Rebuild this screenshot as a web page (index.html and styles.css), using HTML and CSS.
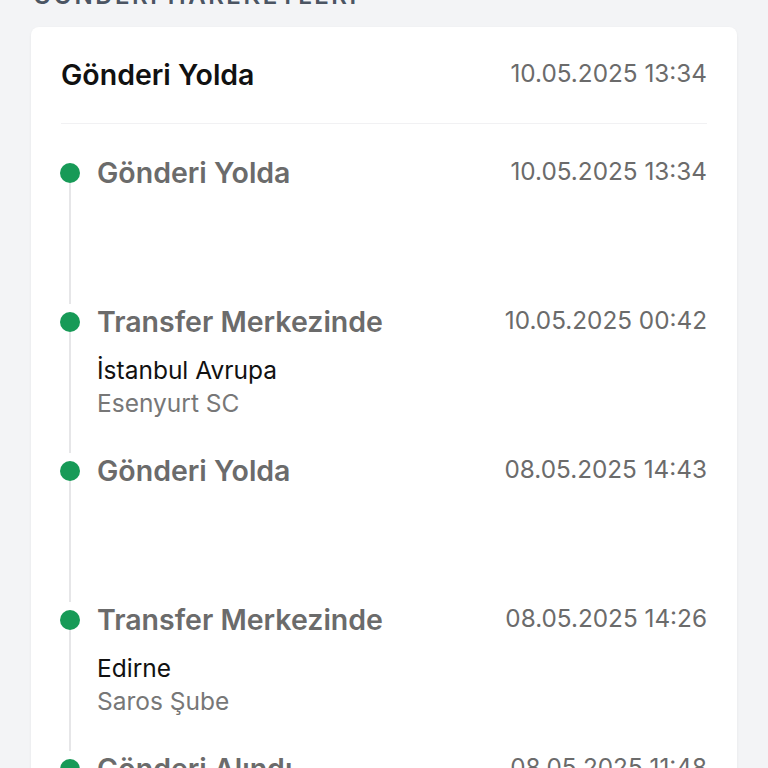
FILE: index.html
```html
<!DOCTYPE html>
<html lang="tr">
  <head>
    <meta name="viewport" content="width=device-width, initial-scale=1">
    <link rel="stylesheet" href="styles.css">
  </head>

  <body>
    <div class="page">
      <h2 class="section-title">GÖNDERİ HAREKETLERİ</h2>

      <div class="card">
        <!-- Son durum -->
        <div class="card-header">
          <span class="status">Gönderi Yolda</span>
          <span class="date">10.05.2025 13:34</span>
        </div>

        <!-- Hareket listesi -->
        <ul class="timeline">
          <li class="event">
            <div class="marker"><span class="dot"></span><span class="line"></span></div>
            <div class="event-body">
              <div class="event-row">
                <span class="event-title">Gönderi Yolda</span>
                <span class="date">10.05.2025 13:34</span>
              </div>
              <p class="place">&nbsp;</p>
              <p class="branch">&nbsp;</p>
            </div>
          </li>

          <li class="event">
            <div class="marker"><span class="dot"></span><span class="line"></span></div>
            <div class="event-body">
              <div class="event-row">
                <span class="event-title">Transfer Merkezinde</span>
                <span class="date">10.05.2025 00:42</span>
              </div>
              <p class="place">İstanbul Avrupa</p>
              <p class="branch">Esenyurt SC</p>
            </div>
          </li>

          <li class="event">
            <div class="marker"><span class="dot"></span><span class="line"></span></div>
            <div class="event-body">
              <div class="event-row">
                <span class="event-title">Gönderi Yolda</span>
                <span class="date">08.05.2025 14:43</span>
              </div>
              <p class="place">&nbsp;</p>
              <p class="branch">&nbsp;</p>
            </div>
          </li>

          <li class="event">
            <div class="marker"><span class="dot"></span><span class="line"></span></div>
            <div class="event-body">
              <div class="event-row">
                <span class="event-title">Transfer Merkezinde</span>
                <span class="date">08.05.2025 14:26</span>
              </div>
              <p class="place">Edirne</p>
              <p class="branch">Saros Şube</p>
            </div>
          </li>

          <li class="event">
            <div class="marker"><span class="dot"></span><span class="line"></span></div>
            <div class="event-body">
              <div class="event-row">
                <span class="event-title">Gönderi Alındı</span>
                <span class="date">08.05.2025 11:48</span>
              </div>
              <p class="place">Edirne</p>
              <p class="branch">Saros Şube</p>
            </div>
          </li>
        </ul>
      </div>
    </div>
  </body>
</html>
```

FILE: styles.css
```css
html, body {
  margin: 0;
  background-color: #f3f4f6; /* fundo cinza claro */
  font-family: Inter, "Noto Sans", sans-serif;
  overflow: hidden;
}

.page {
  padding: 0 31px;
}

.section-title {
  margin: -18px 0 17px 2px;
  font-size: 24px;
  line-height: 28px;
  font-weight: 600;
  letter-spacing: 2.5px;
  color: #4b5563;
}

.card {
  background-color: #ffffff;
  border-radius: 8px;
  box-shadow: 0 1px 3px rgba(0, 0, 0, 0.06);
  padding: 0 30px;
}

.card-header {
  display: flex;
  justify-content: space-between;
  align-items: center;
  padding: 30px 0;
  border-bottom: 1px solid #f1f1f3;
}

.status {
  font-size: 28.5px;
  line-height: 36px;
  font-weight: 600;
  color: #111111;
}

.date {
  font-size: 24.3px;
  line-height: 36px;
  color: #6b6b6b;
  margin-top: -5px;
}

.timeline {
  list-style: none;
  margin: 0;
  padding: 31px 0 0;
}

.event {
  display: flex;
  gap: 17px;
}

/* Coluna do ponto verde e da linha */
.marker {
  display: flex;
  flex-direction: column;
  align-items: center;
  width: 20px;
  margin-left: -1px;
}

.dot {
  width: 20px;
  height: 20px;
  margin-top: 8px;
  border-radius: 50%;
  background-color: #179a57;
  flex-shrink: 0;
}

.line {
  flex: 1;
  width: 2px;
  background-color: #e6e6e8;
}

.event-body {
  flex: 1;
  padding-bottom: 33px;
}

.event-row {
  display: flex;
  justify-content: space-between;
  align-items: center;
}

.event-title {
  font-size: 28.5px;
  line-height: 36px;
  font-weight: 600;
  color: #6b6b6b;
}

.place,
.branch {
  margin: 0;
  font-size: 24.5px;
  line-height: 33px;
}

.place {
  margin-top: 14px;
  color: #111111;
}

.branch {
  color: #777777;
}
```
